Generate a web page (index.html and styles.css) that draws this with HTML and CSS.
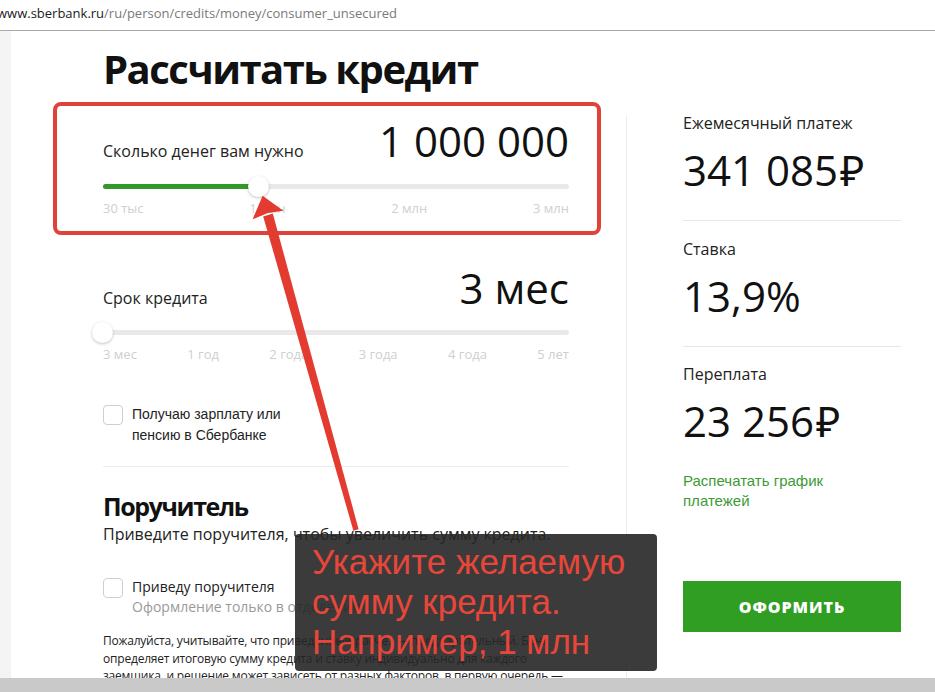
FILE: index.html
```html
<!DOCTYPE html>
<html lang="ru">
<head>
<meta charset="utf-8">
<title>Рассчитать кредит</title>
<link rel="stylesheet" href="styles.css">
</head>
<body>
<div class="urlbar"><span class="url-host">www.sberbank.ru</span><span class="url-path">/ru/person/credits/money/consumer_unsecured</span></div>
<div class="page">
  <div class="strip"></div>
  <main class="calc">
    <h1 class="title">Рассчитать кредит</h1>

    <section class="slider-block first">
      <div class="slider-head">
        <span class="slider-label">Сколько денег вам нужно</span>
        <span class="slider-value">1 000 000</span>
      </div>
      <div class="track">
        <div class="fill" style="width:147px"></div>
        <div class="thumb" style="left:155px"></div>
      </div>
      <div class="ticks">
        <span>30 тыс</span><span>1 млн</span><span>2 млн</span><span>3 млн</span>
      </div>
    </section>

    <section class="slider-block second">
      <div class="slider-head">
        <span class="slider-label">Срок кредита</span>
        <span class="slider-value">3 мес</span>
      </div>
      <div class="track">
        <div class="fill" style="width:0"></div>
        <div class="thumb" style="left:-1px"></div>
      </div>
      <div class="ticks">
        <span>3 мес</span><span>1 год</span><span>2 года</span><span>3 года</span><span>4 года</span><span>5 лет</span>
      </div>
    </section>

    <label class="check salary">
      <span class="box"></span>
      <span class="check-text">Получаю зарплату или<br>пенсию в Сбербанке</span>
    </label>

    <hr class="divider">

    <h2 class="subtitle">Поручитель</h2>
    <p class="lead">Приведите поручителя, чтобы увеличить сумму кредита.</p>

    <label class="check guarantor">
      <span class="box"></span>
      <span class="check-text">Приведу поручителя<span class="hint">Оформление только в отделении</span></span>
    </label>

    <p class="note">Пожалуйста, учитывайте, что приведенный расчет — предварительный. Банк определяет итоговую сумму кредита и ставку индивидуально для каждого заемщика, и решение может зависеть от разных факторов, в первую очередь — от вашей кредитной истории.</p>
  </main>

  <div class="vline"></div>

  <aside class="results">
    <div class="result">
      <div class="result-label">Ежемесячный платеж</div>
      <div class="result-value">341 085<span class="rub">₽</span></div>
    </div>
    <div class="result">
      <div class="result-label">Ставка</div>
      <div class="result-value">13,9%</div>
    </div>
    <div class="result last">
      <div class="result-label">Переплата</div>
      <div class="result-value">23 256<span class="rub">₽</span></div>
    </div>
    <a class="print-link" href="#">Распечатать график<br>платежей</a>
    <button class="submit" type="button">ОФОРМИТЬ</button>
  </aside>
</div>
<div class="bottombar"></div>

<div class="highlight"></div>
<svg class="arrow" width="935" height="692" viewBox="0 0 935 692">
  <polygon points="272.8,213.6 263.2,216.4 353.4,530.8 358.6,529.2" fill="#e33b2f"/>
  <polygon points="262.6,195.7 283.4,210.7 268,213 252.6,219.3" fill="#e33b2f"/>
</svg>
<div class="callout">Укажите желаемую<br>сумму кредита.<br>Например, 1 млн</div>
</body>
</html>
```

FILE: styles.css
```css
* { box-sizing: border-box; }
html, body { margin: 0; padding: 0; }
body {
  width: 935px;
  height: 692px;
  overflow: hidden;
  background: #fff;
  font-family: "Open Sans", "Noto Sans", "DejaVu Sans", sans-serif;
  color: #222;
  position: relative;
}

.urlbar {
  height: 31px;
  border-bottom: 1px solid #a9a9a9;
  font-size: 13px;
  line-height: 27px;
  margin-left: -3px;
  white-space: nowrap;
}
.url-host { color: #1a1a1a; }
.url-path { color: #7a7a7a; }

.page {
  display: flex;
  height: 647px;
  overflow: hidden;
}
.strip {
  width: 11px;
  flex: none;
  background: #f4f4f4;
}
.calc {
  width: 466px;
  flex: none;
  margin-left: 92px;
}

.title {
  margin: 13px 0 0;
  font-size: 40px;
  line-height: 50px;
  font-weight: 700;
  color: #111;
  letter-spacing: -1.5px;
}

.slider-block.first { margin-top: 22px; }
.slider-block.second { margin-top: 47px; }
.slider-head {
  display: flex;
  justify-content: space-between;
  align-items: baseline;
  height: 50px;
}
.slider-label {
  font-size: 16px;
  color: #222;
}
.slider-value {
  font-size: 42px;
  line-height: 50px;
  color: #111;
}
.track {
  position: relative;
  height: 5px;
  margin-top: 17.5px;
  background: #e9e9e9;
  border-radius: 3px;
}
.fill {
  height: 5px;
  background: #2f9a2a;
  border-radius: 3px 0 0 3px;
}
.thumb {
  position: absolute;
  top: -8px;
  width: 21px;
  height: 21px;
  margin-left: -10px;
  border-radius: 50%;
  background: #fff;
  box-shadow: 0 1px 3px rgba(0,0,0,0.25);
}
.ticks {
  display: flex;
  justify-content: space-between;
  margin-top: 11px;
  font-size: 13px;
  line-height: 16px;
  color: #cfcfcf;
}

.check {
  display: flex;
  align-items: flex-start;
  gap: 9px;
  font-family: "Liberation Sans", Arial, sans-serif;
  font-size: 14px;
  line-height: 20px;
  color: #222;
}
.check.salary { margin-top: 42px; line-height: 21px; }
.box {
  flex: none;
  width: 20px;
  height: 20px;
  margin-top: 1px;
  border: 1px solid #cfcfcf;
  border-radius: 4px;
  background: #fff;
}
.check-text { display: block; }
.guarantor .check-text { font-family: "Open Sans", "Noto Sans", sans-serif; }
.hint {
  display: block;
  color: #9a9a9a;
}

.divider {
  margin: 20px 0 0;
  border: 0;
  height: 1px;
  background: #ececec;
}

.subtitle {
  margin: 23px 0 0;
  font-size: 25px;
  line-height: 32px;
  font-weight: 700;
  color: #111;
  letter-spacing: -1.4px;
}
.lead {
  margin: 1px 0 0;
  font-size: 16px;
  line-height: 22px;
  color: #222;
}
.check.guarantor { margin-top: 32px; }

.note {
  margin: 15px 0 0;
  font-size: 12px;
  line-height: 17.5px;
  color: #222;
  letter-spacing: -0.2px;
}

.vline {
  width: 1px;
  flex: none;
  margin-left: 57px;
  margin-top: 84px;
  background: #ececec;
}

.results {
  width: 218px;
  flex: none;
  margin-left: 56px;
  padding-top: 81px;
}
.result {
  border-bottom: 1px solid #e8e8e8;
  padding-bottom: 25px;
  margin-bottom: 16.5px;
}
.result.last { border-bottom: 0; padding-bottom: 0; margin-bottom: 0; }
.result-label {
  font-size: 16px;
  line-height: 22px;
  color: #222;
}
.result-value {
  margin-top: 11px;
  font-size: 42px;
  line-height: 50px;
  color: #111;
  white-space: nowrap;
}
.rub {
  font-family: "Noto Sans", "DejaVu Sans", sans-serif;
  margin-left: 2px;
}
.print-link {
  display: block;
  margin-top: 25px;
  font-family: "Liberation Sans", Arial, sans-serif;
  font-size: 15px;
  line-height: 20px;
  color: #3d9a35;
  text-decoration: none;
}
.submit {
  display: block;
  width: 218px;
  height: 51px;
  margin-top: 70px;
  border: 0;
  background: #2f9e22;
  color: #fff;
  font-family: "Open Sans", "Noto Sans", sans-serif;
  font-size: 16px;
  font-weight: 800;
  letter-spacing: 1px;
}

.bottombar {
  height: 14px;
  background: #c9c9c9;
}

.highlight {
  position: absolute;
  left: 53px;
  top: 102px;
  width: 548px;
  height: 133px;
  border: 4px solid #e0413a;
  border-radius: 8px;
}
.arrow {
  position: absolute;
  left: 0;
  top: 0;
  pointer-events: none;
}
.callout {
  position: absolute;
  left: 295px;
  top: 534px;
  width: 362px;
  height: 137px;
  padding: 8px 0 0 17px;
  border-radius: 4px;
  background: rgba(38, 38, 38, 0.9);
  color: #e8463a;
  font-family: "Liberation Sans", Arial, sans-serif;
  font-size: 35px;
  line-height: 40px;
}
```
